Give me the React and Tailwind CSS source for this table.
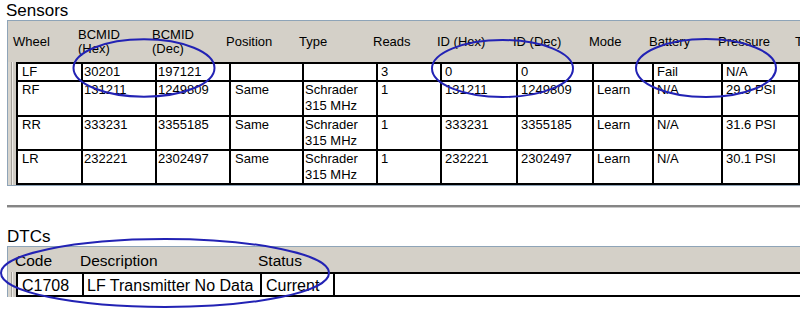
import React from "react";

/* ---------- data ---------- */
const COLS = [
  { label: "Wheel", w: "w-[65px]", pad: "pl-[4px]" },
  { label: ["BCMID", "(Hex)"], w: "w-[74px]", pad: "pl-[1px]" },
  { label: ["BCMID", "(Dec)"], w: "w-[74px]", pad: "pl-[1px]" },
  { label: "Position", w: "w-[73px]", pad: "pl-[4px]" },
  { label: "Type", w: "w-[74px]", pad: "pl-[1px]" },
  { label: "Reads", w: "w-[64px]", pad: "pl-[3px]" },
  { label: "ID (Hex)", w: "w-[76px]", pad: "pl-[3px]" },
  { label: "ID (Dec)", w: "w-[76px]", pad: "pl-[3px]" },
  { label: "Mode", w: "w-[60px]", pad: "pl-[3px]" },
  { label: "Battery", w: "w-[69px]", pad: "pl-[3px]" },
  { label: "Pressure", w: "w-[79px] border-r-2", pad: "pl-[3px]" },
];

const SCHRADER = ["Schrader", "315 MHz"];

const SENSORS = [
  { h: "h-[18px]", cells: ["LF", "30201", "197121", "", "", "3", "0", "0", "", "Fail", "N/A"] },
  { h: "h-[35px]", cells: ["RF", "131211", "1249809", "Same", SCHRADER, "1", "131211", "1249809", "Learn", "N/A", "29.9 PSI"] },
  { h: "h-[34px]", cells: ["RR", "333231", "3355185", "Same", SCHRADER, "1", "333231", "3355185", "Learn", "N/A", "31.6 PSI"] },
  { h: "h-[36px] border-b-2", cells: ["LR", "232221", "2302497", "Same", SCHRADER, "1", "232221", "2302497", "Learn", "N/A", "30.1 PSI"] },
];

const HEADER_W = ["w-[65px]", "w-[74px]", "w-[74px]", "w-[73px]", "w-[74px]", "w-[64px]", "w-[76px]", "w-[76px]", "w-[60px]", "w-[69px]", "w-[77px]"];

/* ---------- bits ---------- */
function RowStrip() {
  return (
    <div className="w-[8px] shrink-0 flex bg-[#d4d0c8]">
      <div className="w-[3px] bg-[#d8d5ce]" />
      <div className="w-[1px] bg-[#a3a099]" />
      <div className="w-[1px] bg-[#eeece8]" />
      <div className="flex-1 bg-[#cfcbc3]" />
    </div>
  );
}

function Lines({ v }) {
  if (Array.isArray(v)) return v.map((l, i) => <div key={i}>{l}</div>);
  return v;
}

function SensorsPanel() {
  return (
    <div className="ml-[7px] w-[793px] border-l border-t border-b border-[#8ea4b8]">
      <div className="h-[41px] bg-[#d4d0c8] flex pl-[5px] pt-[1px] text-[13px] leading-[14px] whitespace-nowrap">
        {COLS.map((c, i) => (
          <div key={i} className={`${HEADER_W[i]} shrink-0 flex items-center`}>
            <div><Lines v={c.label} /></div>
          </div>
        ))}
        <div className="shrink-0 flex items-center">Tread</div>
      </div>
      <div className="flex">
        <RowStrip />
        <div className="flex flex-col">
          {SENSORS.map((r, ri) => (
            <div key={ri} className={`${r.h} flex border-t-2 border-black`}>
              {r.cells.map((v, ci) => (
                <div
                  key={ci}
                  className={`${COLS[ci].w} ${COLS[ci].pad} shrink-0 border-l-2 border-black text-[13px] leading-[16px] whitespace-nowrap`}
                >
                  <Lines v={v} />
                </div>
              ))}
            </div>
          ))}
        </div>
      </div>
    </div>
  );
}

function DtcPanel() {
  return (
    <div className="ml-[7px] w-[793px] border-l border-t border-[#8ea4b8]">
      <div className="h-[25px] bg-[#d4d0c8] flex items-center pl-[7px] pt-[3px] text-[15.5px] leading-[18px]">
        <div className="w-[65px] shrink-0">Code</div>
        <div className="w-[178px] shrink-0">Description</div>
        <div className="w-[73px] shrink-0">Status</div>
      </div>
      <div className="flex h-[25px]">
        <RowStrip />
        <div className="flex-1 flex border-t-2 border-b-2 border-black text-[16px] leading-[21px]">
          <div className="w-[66px] shrink-0 border-l-2 border-black pl-[4px] pt-[1px]">C1708</div>
          <div className="w-[178px] shrink-0 border-l-2 border-black pl-[3px] pt-[1px]">LF Transmitter No Data</div>
          <div className="w-[73px] shrink-0 border-l-2 border-black pl-[4px] pt-[1px]">Current</div>
          <div className="flex-1 border-l-2 border-black" />
        </div>
      </div>
    </div>
  );
}

/* ---------- page ---------- */
export default function App() {
  return (
    <div className="relative w-[800px] h-[310px] overflow-hidden bg-white text-black font-['Liberation_Sans',Arial,sans-serif]">
      <div className="h-[20px] pl-[6px] pt-[2px] text-[17px] leading-[18px]">Sensors</div>
      <SensorsPanel />

      <div className="mt-[19px] ml-[7px] h-[3px] border-t-2 border-[#858585] border-b border-b-[#c8c8c8]" />

      <div className="h-[38px] pl-[7px] pt-[20px] text-[17px] leading-[18px]">DTCs</div>
      <DtcPanel />

      {/* hand-drawn highlight rings */}
      <svg className="absolute inset-0 pointer-events-none" width="800" height="310" viewBox="0 0 800 310" fill="none">
        <g stroke="#2222b4" strokeWidth="2">
          <ellipse cx="144" cy="68" rx="70.5" ry="28.7" />
          <ellipse cx="502.5" cy="68.5" rx="70.5" ry="28.5" />
          <ellipse cx="706" cy="68" rx="70" ry="29" />
          <ellipse cx="165" cy="273" rx="164" ry="34" />
        </g>
      </svg>
    </div>
  );
}
